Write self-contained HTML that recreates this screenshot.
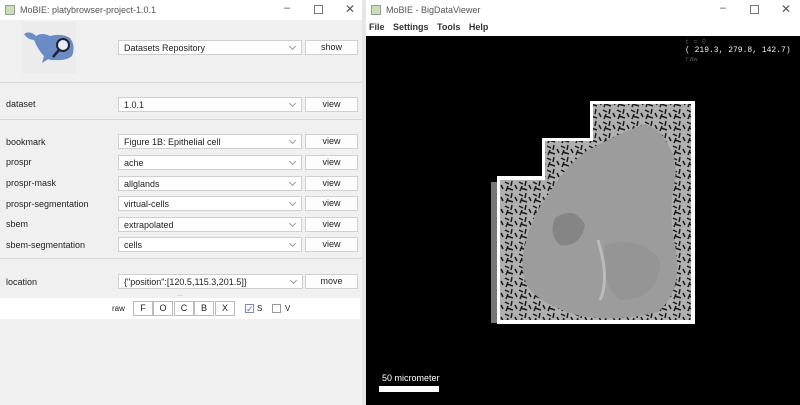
<!DOCTYPE html>
<html><head><meta charset="utf-8"><style>
*{margin:0;padding:0;box-sizing:border-box}
body{width:800px;height:405px;overflow:hidden;position:relative;background:#f0f0f0;font-family:"Liberation Sans",sans-serif;font-size:9px;color:#222}
.a{position:absolute}
.lbl{position:absolute;left:6px;font-size:9px}
.cb{position:absolute;left:118px;width:184px;height:15px;background:#fff;border:1px solid #cfcfcf;font-size:9px;padding:2px 5px;line-height:10px}
.cb:after{content:"";position:absolute;right:6px;top:3px;width:4px;height:4px;border-right:1px solid #999;border-bottom:1px solid #999;transform:rotate(45deg)}
.bt{position:absolute;left:305px;width:53px;height:15px;background:#fdfdfd;border:1px solid #d0d0d0;text-align:center;line-height:13px;font-size:9px}
.sep{position:absolute;left:0;width:362px;height:1px;background:#d8d8d8}
.sb{position:absolute;top:301px;width:20px;height:15px;background:#fff;border:1px solid #bbb;text-align:center;line-height:13px;font-size:9px}
.tb{font-size:9px;color:#555}
</style></head><body>
<div class="a" style="left:0;top:0;width:362px;height:20px;background:#fff"></div>
<div class="a" style="left:5px;top:5px;width:10px;height:10px;border:1px solid #999;background:#cdb"></div>
<div class="a tb" style="left:20px;top:5px">MoBIE: platybrowser-project-1.0.1</div>
<div class="a tb" style="left:284px;top:2px;font-size:11px">–</div>
<div class="a" style="left:314px;top:5px;width:9px;height:9px;border:1px solid #777"></div>
<div class="a tb" style="left:345px;top:2px;font-size:12px">✕</div>
<div class="a" style="left:22px;top:22px;width:54px;height:52px;background:#ececec"></div>
<svg class="a" style="left:22px;top:28px" width="56" height="38" viewBox="0 0 56 38">
<path d="M2 6 Q8 2 14 8 Q20 4 28 8 Q40 5 48 10 Q54 18 50 28 Q44 33 34 32 Q26 33 22 28 Q16 22 12 12 Q6 12 2 6Z" fill="#6a8bc4"/>
<path d="M22 28 L20 35 L28 30Z" fill="#6a8bc4"/>
<circle cx="41" cy="17" r="6" fill="#e6eef6" stroke="#223" stroke-width="2"/>
<line x1="37" y1="22" x2="31" y2="29" stroke="#223" stroke-width="2.5"/>
</svg>
<div class="cb" style="top:40px">Datasets Repository</div><div class="bt" style="top:40px">show</div>
<div class="sep" style="top:82px"></div>
<div class="lbl" style="top:99px">dataset</div><div class="cb" style="top:97px">1.0.1</div><div class="bt" style="top:97px">view</div>
<div class="sep" style="top:119px"></div>
<div class="lbl" style="top:137px">bookmark</div><div class="cb" style="top:134px">Figure 1B: Epithelial cell</div><div class="bt" style="top:134px">view</div>
<div class="lbl" style="top:157px">prospr</div><div class="cb" style="top:155px">ache</div><div class="bt" style="top:155px">view</div>
<div class="lbl" style="top:178px">prospr-mask</div><div class="cb" style="top:176px">allglands</div><div class="bt" style="top:176px">view</div>
<div class="lbl" style="top:199px">prospr-segmentation</div><div class="cb" style="top:196px">virtual-cells</div><div class="bt" style="top:196px">view</div>
<div class="lbl" style="top:219px">sbem</div><div class="cb" style="top:217px">extrapolated</div><div class="bt" style="top:217px">view</div>
<div class="lbl" style="top:240px">sbem-segmentation</div><div class="cb" style="top:237px">cells</div><div class="bt" style="top:237px">view</div>
<div class="sep" style="top:258px"></div>
<div class="lbl" style="top:277px">location</div>
<div class="cb" style="top:274px;width:185px">{"position":[120.5,115.3,201.5]}</div>
<div class="bt" style="top:274px">move</div>
<div class="a" style="left:177px;top:291px;font-size:7px;color:#999">...</div>
<div class="a" style="left:0;top:298px;width:360px;height:21px;background:#fff"></div>
<div class="a" style="left:112px;top:304px;font-size:8px">raw</div>
<div class="sb" style="left:133px">F</div><div class="sb" style="left:153px">O</div><div class="sb" style="left:174px">C</div><div class="sb" style="left:194px">B</div><div class="sb" style="left:215px">X</div>
<div class="a" style="left:245px;top:304px;width:9px;height:9px;border:1px solid #88a;color:#37c;font-size:9px;line-height:8px">✓</div>
<div class="a" style="left:257px;top:304px;font-size:8px">S</div>
<div class="a" style="left:272px;top:304px;width:9px;height:9px;border:1px solid #999;background:#fff"></div>
<div class="a" style="left:285px;top:304px;font-size:8px">V</div>
<div class="a" style="left:362px;top:0;width:4px;height:405px;background:#e6e6e6"></div>
<div class="a" style="left:366px;top:0;width:434px;height:36px;background:#fff"></div>
<div class="a" style="left:371px;top:5px;width:10px;height:10px;border:1px solid #999;background:#cdb"></div>
<div class="a tb" style="left:386px;top:5px">MoBIE - BigDataViewer</div>
<div class="a tb" style="left:720px;top:2px;font-size:11px">–</div>
<div class="a" style="left:750px;top:5px;width:9px;height:9px;border:1px solid #777"></div>
<div class="a tb" style="left:781px;top:2px;font-size:12px">✕</div>
<div class="a" style="left:369px;top:22px;font-size:9px;font-weight:bold;color:#333;word-spacing:6px">File Settings Tools Help</div>
<div class="a" style="left:366px;top:36px;width:434px;height:369px;background:#000"></div>
<div class="a" style="left:685px;top:39px;font-family:'Liberation Mono',monospace;font-size:7px;color:#555">t = 0</div>
<div class="a" style="left:685px;top:46px;font-family:'Liberation Mono',monospace;font-size:8px;color:#eee">( 219.3, 279.8, 142.7)</div>
<div class="a" style="left:685px;top:56px;font-family:'Liberation Mono',monospace;font-size:7px;color:#555">raw</div>
<svg class="a" style="left:0;top:0" width="800" height="405">
<defs><pattern id="p" width="14" height="12" patternUnits="userSpaceOnUse">
<rect width="14" height="12" fill="#b0b0b0"/>
<path d="M1 2 L5 4 M8 1 L7 6 M3 8 L9 10 M11 5 L13 9 M2 11 L4 6" stroke="#1a1a1a" stroke-width="1.5"/>
</pattern></defs>
<rect x="491" y="182" width="6" height="141" fill="#777"/>
<path d="M590 101 H695 V324 H497 V176 H542 V138 H590Z" fill="#fff"/>
<path d="M593 104 H691 V320 H500 V180 H545 V141 H593Z" fill="url(#p)"/>
<path d="M645 124 Q662 130 668 145 Q678 160 675 180 Q668 210 675 245 Q684 290 658 312 Q620 322 580 316 Q545 306 530 290 Q518 272 525 245 Q532 215 548 195 Q562 170 585 152 Q615 135 645 124Z" fill="#9c9c9c"/>
<path d="M555 218 Q575 205 585 225 Q580 248 560 245 Q548 235 555 218Z" fill="#858585"/>
<path d="M605 245 Q640 235 660 260 Q660 300 620 300 Q600 285 605 245Z" fill="#959595"/>
<path d="M598 240 Q610 280 600 300" stroke="#bbb" stroke-width="3" fill="none"/>
</svg>
<div class="a" style="left:382px;top:373px;font-size:9px;color:#fff">50 micrometer</div>
<div class="a" style="left:379px;top:386px;width:60px;height:6px;background:#fff"></div>
</body></html>
